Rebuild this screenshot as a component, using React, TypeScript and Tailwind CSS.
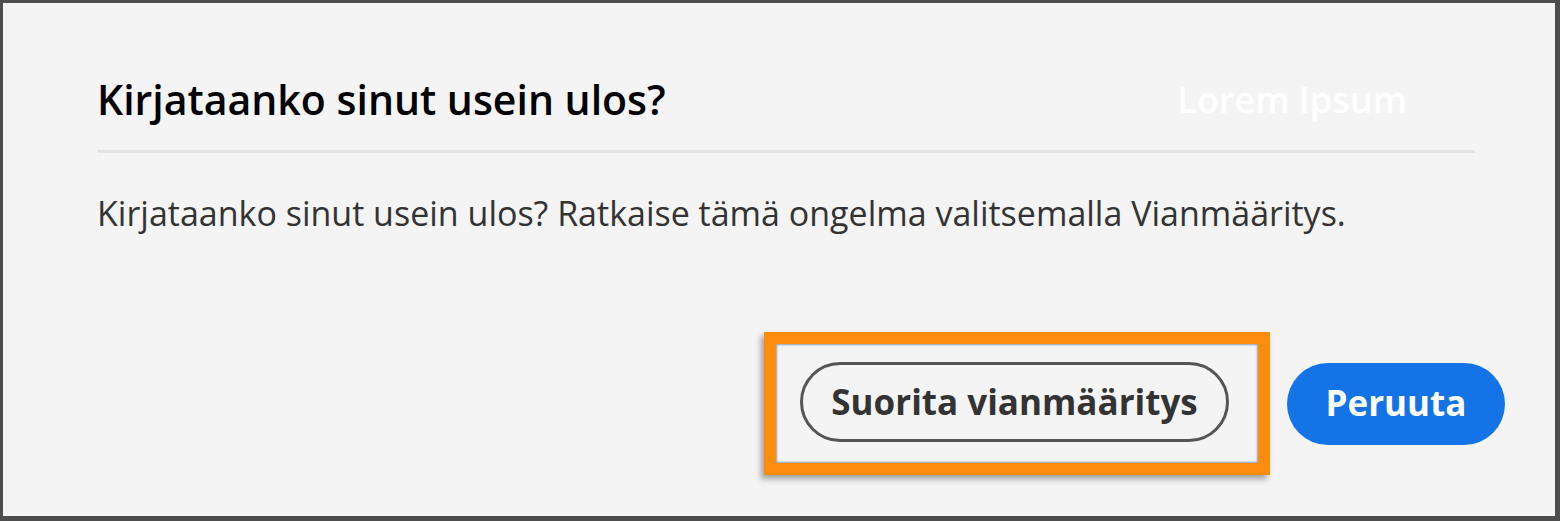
export default function App() {
    return (
        <div
            className="w-[1560px] h-[521px] bg-[#f4f4f4] border-t-[3px] border-l-[3px] border-r-[5px] border-b-[5px] border-[#4d4d4d] flex flex-col"
            style={{ fontFamily: '"Open Sans", "Noto Sans", sans-serif' }}
        >
            <div className="pl-[94px] pr-[80px] pt-[71px]">
                {/* Header */}
                <div className="flex items-center justify-between h-[52px]">
                    <h1 className="text-[41px] font-semibold text-black">Kirjataanko sinut usein ulos?</h1>
                    <span className="text-[36px] font-semibold text-white mr-[68px]">Lorem Ipsum</span>
                </div>
                <div className="mt-[24px] h-[3px] bg-[#e4e4e4]" />

                {/* Body */}
                <p className="mt-[40px] text-[34px] leading-[40px] text-[#333]">
                    Kirjataanko sinut usein ulos? Ratkaise tämä ongelma valitsemalla Vianmääritys.
                </p>
            </div>

            {/* Actions */}
            <div className="flex items-center justify-end gap-[17px] pr-[50px] mt-[99px]">
                <div className="border-[12px] border-[#fb8c0c] pl-[24px] pr-[29px] pt-[18px] pb-[21px] shadow-[inset_0_0_2px_1px_rgba(80,100,130,0.6),-3px_4px_6px_rgba(0,0,0,0.35)]">
                    <button className="h-[80px] w-[429px] rounded-full border-[3px] border-[#555] text-[35px] font-bold text-[#333]">
                        Suorita vianmääritys
                    </button>
                </div>
                <button className="h-[82px] w-[218px] rounded-full bg-[#1473e6] text-[35px] font-bold text-white">
                    Peruuta
                </button>
            </div>
        </div>
    )
}
